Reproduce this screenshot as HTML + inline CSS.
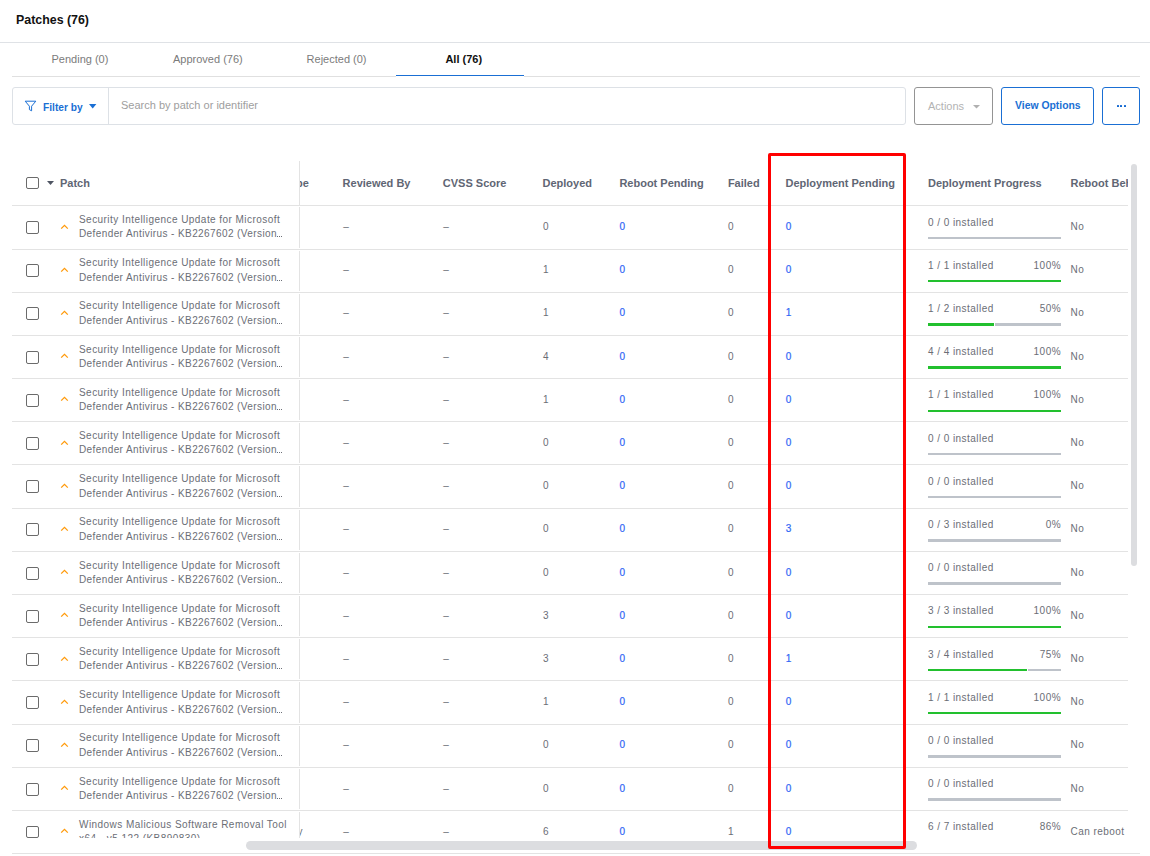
<!DOCTYPE html>
<html><head><meta charset="utf-8"><style>
html,body{margin:0;padding:0;width:1150px;height:856px;overflow:hidden;background:#fff}
body{position:relative;font-family:'Liberation Sans', sans-serif}
.t{position:absolute;white-space:nowrap;line-height:20px;font-family:'Liberation Sans', sans-serif}
.r{position:absolute}
</style></head><body>
<div class="t" style="left:16px;top:10px;font-size:12.4px;font-weight:bold;color:#111;">Patches (76)</div>
<div class="r" style="left:0px;top:42px;width:1150px;height:1px;background:#dfe2e6"></div>
<div class="t" style="left:51.5px;top:49px;font-size:11px;font-weight:normal;color:#7b7b7b;">Pending (0)</div>
<div class="t" style="left:173px;top:49px;font-size:11px;font-weight:normal;color:#7b7b7b;">Approved (76)</div>
<div class="t" style="left:306.6px;top:49px;font-size:11px;font-weight:normal;color:#7b7b7b;">Rejected (0)</div>
<div class="t" style="left:445.4px;top:49px;font-size:11px;font-weight:bold;color:#111;">All (76)</div>
<div class="r" style="left:12px;top:76px;width:384px;height:1px;background:#e0e0e0"></div>
<div class="r" style="left:524px;top:76px;width:616px;height:1px;background:#e0e0e0"></div>
<div class="r" style="left:396px;top:75px;width:128px;height:1px;background:#1a6fd4"></div>
<div class="r" style="left:12px;top:87px;width:894px;height:38px;box-sizing:border-box;border:1px solid #dde1e6;border-radius:3px"></div>
<div class="r" style="left:108px;top:88px;width:1px;height:36px;background:#dde1e6"></div>
<svg class="r" style="left:24px;top:100px" width="13" height="12" viewBox="0 0 13 12"><path d="M1.2 1.2 H11.8 L7.6 6.2 V10.8 L5.4 9.6 V6.2 Z" fill="none" stroke="#1a6fd4" stroke-width="1" stroke-linejoin="round"/></svg>
<div class="t" style="left:43px;top:98px;font-size:10.2px;font-weight:bold;color:#1a6fd4;">Filter by</div>
<svg class="r" style="left:89px;top:104px" width="8" height="5" viewBox="0 0 8 5"><path d="M0 0 H7.4 L3.7 4.4 Z" fill="#1a6fd4"/></svg>
<div class="t" style="left:121px;top:95px;font-size:11px;font-weight:normal;color:#9e9e9e;">Search by patch or identifier</div>
<div class="r" style="left:914px;top:87px;width:79px;height:38px;box-sizing:border-box;border:1px solid #949494;border-radius:3px"></div>
<div class="t" style="left:928px;top:96px;font-size:11px;font-weight:normal;color:#b3b3b3;">Actions</div>
<svg class="r" style="left:973px;top:105px" width="8" height="4" viewBox="0 0 8 4"><path d="M0 0 H7 L3.5 3.5 Z" fill="#b0b0b0"/></svg>
<div class="r" style="left:1001px;top:87px;width:93px;height:38px;box-sizing:border-box;border:1px solid #1a6fd4;border-radius:3px"></div>
<div class="t" style="left:1015px;top:96px;font-size:10.4px;font-weight:bold;color:#1a6fd4;">View Options</div>
<div class="r" style="left:1102px;top:87px;width:38px;height:38px;box-sizing:border-box;border:1px solid #1a6fd4;border-radius:3px"></div>
<div class="r" style="left:1117px;top:105px;width:2px;height:2px;background:#0f66d0;border-radius:0.5px"></div>
<div class="r" style="left:1120px;top:105px;width:2px;height:2px;background:#0f66d0;border-radius:0.5px"></div>
<div class="r" style="left:1124px;top:105px;width:2px;height:2px;background:#0f66d0;border-radius:0.5px"></div>
<div class="r" style="left:26px;top:177px;width:13px;height:12px;box-sizing:border-box;border:1.5px solid #6b6b6b;border-radius:2px"></div>
<svg class="r" style="left:47px;top:181px" width="8" height="5" viewBox="0 0 8 5"><path d="M0 0 H7 L3.5 4 Z" fill="#4f5563"/></svg>
<div class="t" style="left:60px;top:173px;font-size:11px;font-weight:bold;color:#5f6674;">Patch</div>
<div class="r" style="left:300px;top:160px;width:40px;height:40px;overflow:hidden"><div class="t" style="left:-16px;top:13px;font-size:11px;font-weight:bold;color:#5f6674">Type</div></div>
<div class="t" style="left:342.6px;top:173px;font-size:11px;font-weight:bold;color:#5f6674;">Reviewed By</div>
<div class="t" style="left:442.8px;top:173px;font-size:11px;font-weight:bold;color:#5f6674;">CVSS Score</div>
<div class="t" style="left:542.5px;top:173px;font-size:11px;font-weight:bold;color:#5f6674;">Deployed</div>
<div class="t" style="left:619.4px;top:173px;font-size:11px;font-weight:bold;color:#5f6674;">Reboot Pending</div>
<div class="t" style="left:727.9px;top:173px;font-size:11px;font-weight:bold;color:#5f6674;">Failed</div>
<div class="t" style="left:785.5px;top:173px;font-size:11px;font-weight:bold;color:#5f6674;">Deployment Pending</div>
<div class="t" style="left:928px;top:173px;font-size:11px;font-weight:bold;color:#5f6674;">Deployment Progress</div>
<div class="r" style="left:1070px;top:160px;width:58px;height:40px;overflow:hidden"><div class="t" style="left:0.5px;top:13px;font-size:11px;font-weight:bold;color:#5f6674">Reboot Behavior</div></div>
<div class="r" style="left:12px;top:205px;width:1116px;height:1px;background:#e3e3e3"></div>
<div class="r" style="left:299px;top:161px;width:1px;height:44px;background:#e3e3e3"></div>
<div class="r" style="left:0;top:206px;width:1150px;height:632px;overflow:hidden">
<div class="r" style="left:0;top:-206px;width:1150px;height:856px">
<div class="r" style="left:12px;top:249px;width:1116px;height:1px;background:#e3e3e3"></div>
<div class="r" style="left:299px;top:207px;width:1px;height:41px;background:#e3e3e3"></div>
<div class="r" style="left:26px;top:221px;width:13px;height:13px;box-sizing:border-box;border:1.5px solid #6b6b6b;border-radius:2px"></div>
<svg class="r" style="left:60px;top:222.60px" width="9" height="7" viewBox="0 0 9 7"><path d="M1.2 5.6 L4.5 2.3 L7.8 5.6" fill="none" stroke="#ff9a0a" stroke-width="1.3"/></svg>
<div class="t" style="left:79px;top:210px;font-size:10px;font-weight:normal;color:#6b6e76;letter-spacing:0.45px;">Security Intelligence Update for Microsoft</div>
<div class="t" style="left:79px;top:224px;font-size:10px;font-weight:normal;color:#6b6e76;letter-spacing:0.4px;">Defender Antivirus - KB2267602 (Version</div>
<div class="r" style="left:277px;top:236px;width:6px;height:1px;background:repeating-linear-gradient(90deg,#6b6e76 0 1.2px,transparent 1.2px 2.1px)"></div>
<div class="t" style="left:343.2px;top:217px;font-size:10px;font-weight:normal;color:#6b6e76;">–</div>
<div class="t" style="left:443.2px;top:217px;font-size:10px;font-weight:normal;color:#6b6e76;">–</div>
<div class="t" style="left:543px;top:217px;font-size:10px;font-weight:normal;color:#6b6e76;">0</div>
<div class="t" style="left:619.4px;top:217px;font-size:10px;font-weight:normal;color:#2f66f5;-webkit-text-stroke:0.2px #2f66f5">0</div>
<div class="t" style="left:728px;top:217px;font-size:10px;font-weight:normal;color:#6b6e76;">0</div>
<div class="t" style="left:785.8px;top:217px;font-size:10px;font-weight:normal;color:#2f66f5;-webkit-text-stroke:0.2px #2f66f5">0</div>
<div class="t" style="left:928px;top:213px;font-size:10px;font-weight:normal;color:#6b6e76;letter-spacing:0.45px;">0 / 0 installed</div>
<div class="r" style="left:928px;top:237px;width:133px;height:2px;background:#bec3ca"></div>
<div class="t" style="left:1070.5px;top:217px;font-size:10px;font-weight:normal;color:#6b6e76;letter-spacing:0.45px;">No</div>
<div class="r" style="left:12px;top:292px;width:1116px;height:1px;background:#e3e3e3"></div>
<div class="r" style="left:299px;top:251px;width:1px;height:40px;background:#e3e3e3"></div>
<div class="r" style="left:26px;top:264px;width:13px;height:13px;box-sizing:border-box;border:1.5px solid #6b6b6b;border-radius:2px"></div>
<svg class="r" style="left:60px;top:265.80px" width="9" height="7" viewBox="0 0 9 7"><path d="M1.2 5.6 L4.5 2.3 L7.8 5.6" fill="none" stroke="#ff9a0a" stroke-width="1.3"/></svg>
<div class="t" style="left:79px;top:253px;font-size:10px;font-weight:normal;color:#6b6e76;letter-spacing:0.45px;">Security Intelligence Update for Microsoft</div>
<div class="t" style="left:79px;top:268px;font-size:10px;font-weight:normal;color:#6b6e76;letter-spacing:0.4px;">Defender Antivirus - KB2267602 (Version</div>
<div class="r" style="left:277px;top:280px;width:6px;height:1px;background:repeating-linear-gradient(90deg,#6b6e76 0 1.2px,transparent 1.2px 2.1px)"></div>
<div class="t" style="left:343.2px;top:260px;font-size:10px;font-weight:normal;color:#6b6e76;">–</div>
<div class="t" style="left:443.2px;top:260px;font-size:10px;font-weight:normal;color:#6b6e76;">–</div>
<div class="t" style="left:543px;top:260px;font-size:10px;font-weight:normal;color:#6b6e76;">1</div>
<div class="t" style="left:619.4px;top:260px;font-size:10px;font-weight:normal;color:#2f66f5;-webkit-text-stroke:0.2px #2f66f5">0</div>
<div class="t" style="left:728px;top:260px;font-size:10px;font-weight:normal;color:#6b6e76;">0</div>
<div class="t" style="left:785.8px;top:260px;font-size:10px;font-weight:normal;color:#2f66f5;-webkit-text-stroke:0.2px #2f66f5">0</div>
<div class="t" style="left:928px;top:256px;font-size:10px;font-weight:normal;color:#6b6e76;letter-spacing:0.45px;">1 / 1 installed</div>
<div class="t" style="left:1020px;top:256px;font-size:10px;font-weight:normal;color:#6b6e76;letter-spacing:0.45px;width:41px;text-align:right">100%</div>
<div class="r" style="left:928px;top:280px;width:133px;height:2px;background:#22c02e"></div>
<div class="t" style="left:1070.5px;top:260px;font-size:10px;font-weight:normal;color:#6b6e76;letter-spacing:0.45px;">No</div>
<div class="r" style="left:12px;top:335px;width:1116px;height:1px;background:#e3e3e3"></div>
<div class="r" style="left:299px;top:294px;width:1px;height:40px;background:#e3e3e3"></div>
<div class="r" style="left:26px;top:307px;width:13px;height:13px;box-sizing:border-box;border:1.5px solid #6b6b6b;border-radius:2px"></div>
<svg class="r" style="left:60px;top:309.00px" width="9" height="7" viewBox="0 0 9 7"><path d="M1.2 5.6 L4.5 2.3 L7.8 5.6" fill="none" stroke="#ff9a0a" stroke-width="1.3"/></svg>
<div class="t" style="left:79px;top:296px;font-size:10px;font-weight:normal;color:#6b6e76;letter-spacing:0.45px;">Security Intelligence Update for Microsoft</div>
<div class="t" style="left:79px;top:311px;font-size:10px;font-weight:normal;color:#6b6e76;letter-spacing:0.4px;">Defender Antivirus - KB2267602 (Version</div>
<div class="r" style="left:277px;top:323px;width:6px;height:1px;background:repeating-linear-gradient(90deg,#6b6e76 0 1.2px,transparent 1.2px 2.1px)"></div>
<div class="t" style="left:343.2px;top:303px;font-size:10px;font-weight:normal;color:#6b6e76;">–</div>
<div class="t" style="left:443.2px;top:303px;font-size:10px;font-weight:normal;color:#6b6e76;">–</div>
<div class="t" style="left:543px;top:303px;font-size:10px;font-weight:normal;color:#6b6e76;">1</div>
<div class="t" style="left:619.4px;top:303px;font-size:10px;font-weight:normal;color:#2f66f5;-webkit-text-stroke:0.2px #2f66f5">0</div>
<div class="t" style="left:728px;top:303px;font-size:10px;font-weight:normal;color:#6b6e76;">0</div>
<div class="t" style="left:785.8px;top:303px;font-size:10px;font-weight:normal;color:#2f66f5;-webkit-text-stroke:0.2px #2f66f5">1</div>
<div class="t" style="left:928px;top:299px;font-size:10px;font-weight:normal;color:#6b6e76;letter-spacing:0.45px;">1 / 2 installed</div>
<div class="t" style="left:1020px;top:299px;font-size:10px;font-weight:normal;color:#6b6e76;letter-spacing:0.45px;width:41px;text-align:right">50%</div>
<div class="r" style="left:928px;top:323px;width:66px;height:3px;background:#22c02e"></div>
<div class="r" style="left:995px;top:323px;width:66px;height:3px;background:#bec3ca"></div>
<div class="t" style="left:1070.5px;top:303px;font-size:10px;font-weight:normal;color:#6b6e76;letter-spacing:0.45px;">No</div>
<div class="r" style="left:12px;top:378px;width:1116px;height:1px;background:#e3e3e3"></div>
<div class="r" style="left:299px;top:337px;width:1px;height:40px;background:#e3e3e3"></div>
<div class="r" style="left:26px;top:351px;width:13px;height:13px;box-sizing:border-box;border:1.5px solid #6b6b6b;border-radius:2px"></div>
<svg class="r" style="left:60px;top:352.20px" width="9" height="7" viewBox="0 0 9 7"><path d="M1.2 5.6 L4.5 2.3 L7.8 5.6" fill="none" stroke="#ff9a0a" stroke-width="1.3"/></svg>
<div class="t" style="left:79px;top:340px;font-size:10px;font-weight:normal;color:#6b6e76;letter-spacing:0.45px;">Security Intelligence Update for Microsoft</div>
<div class="t" style="left:79px;top:354px;font-size:10px;font-weight:normal;color:#6b6e76;letter-spacing:0.4px;">Defender Antivirus - KB2267602 (Version</div>
<div class="r" style="left:277px;top:366px;width:6px;height:1px;background:repeating-linear-gradient(90deg,#6b6e76 0 1.2px,transparent 1.2px 2.1px)"></div>
<div class="t" style="left:343.2px;top:347px;font-size:10px;font-weight:normal;color:#6b6e76;">–</div>
<div class="t" style="left:443.2px;top:347px;font-size:10px;font-weight:normal;color:#6b6e76;">–</div>
<div class="t" style="left:543px;top:347px;font-size:10px;font-weight:normal;color:#6b6e76;">4</div>
<div class="t" style="left:619.4px;top:347px;font-size:10px;font-weight:normal;color:#2f66f5;-webkit-text-stroke:0.2px #2f66f5">0</div>
<div class="t" style="left:728px;top:347px;font-size:10px;font-weight:normal;color:#6b6e76;">0</div>
<div class="t" style="left:785.8px;top:347px;font-size:10px;font-weight:normal;color:#2f66f5;-webkit-text-stroke:0.2px #2f66f5">0</div>
<div class="t" style="left:928px;top:342px;font-size:10px;font-weight:normal;color:#6b6e76;letter-spacing:0.45px;">4 / 4 installed</div>
<div class="t" style="left:1020px;top:342px;font-size:10px;font-weight:normal;color:#6b6e76;letter-spacing:0.45px;width:41px;text-align:right">100%</div>
<div class="r" style="left:928px;top:366px;width:133px;height:3px;background:#22c02e"></div>
<div class="t" style="left:1070.5px;top:347px;font-size:10px;font-weight:normal;color:#6b6e76;letter-spacing:0.45px;">No</div>
<div class="r" style="left:12px;top:421px;width:1116px;height:1px;background:#e3e3e3"></div>
<div class="r" style="left:299px;top:380px;width:1px;height:40px;background:#e3e3e3"></div>
<div class="r" style="left:26px;top:394px;width:13px;height:13px;box-sizing:border-box;border:1.5px solid #6b6b6b;border-radius:2px"></div>
<svg class="r" style="left:60px;top:395.40px" width="9" height="7" viewBox="0 0 9 7"><path d="M1.2 5.6 L4.5 2.3 L7.8 5.6" fill="none" stroke="#ff9a0a" stroke-width="1.3"/></svg>
<div class="t" style="left:79px;top:383px;font-size:10px;font-weight:normal;color:#6b6e76;letter-spacing:0.45px;">Security Intelligence Update for Microsoft</div>
<div class="t" style="left:79px;top:397px;font-size:10px;font-weight:normal;color:#6b6e76;letter-spacing:0.4px;">Defender Antivirus - KB2267602 (Version</div>
<div class="r" style="left:277px;top:409px;width:6px;height:1px;background:repeating-linear-gradient(90deg,#6b6e76 0 1.2px,transparent 1.2px 2.1px)"></div>
<div class="t" style="left:343.2px;top:390px;font-size:10px;font-weight:normal;color:#6b6e76;">–</div>
<div class="t" style="left:443.2px;top:390px;font-size:10px;font-weight:normal;color:#6b6e76;">–</div>
<div class="t" style="left:543px;top:390px;font-size:10px;font-weight:normal;color:#6b6e76;">1</div>
<div class="t" style="left:619.4px;top:390px;font-size:10px;font-weight:normal;color:#2f66f5;-webkit-text-stroke:0.2px #2f66f5">0</div>
<div class="t" style="left:728px;top:390px;font-size:10px;font-weight:normal;color:#6b6e76;">0</div>
<div class="t" style="left:785.8px;top:390px;font-size:10px;font-weight:normal;color:#2f66f5;-webkit-text-stroke:0.2px #2f66f5">0</div>
<div class="t" style="left:928px;top:385px;font-size:10px;font-weight:normal;color:#6b6e76;letter-spacing:0.45px;">1 / 1 installed</div>
<div class="t" style="left:1020px;top:385px;font-size:10px;font-weight:normal;color:#6b6e76;letter-spacing:0.45px;width:41px;text-align:right">100%</div>
<div class="r" style="left:928px;top:410px;width:133px;height:2px;background:#22c02e"></div>
<div class="t" style="left:1070.5px;top:390px;font-size:10px;font-weight:normal;color:#6b6e76;letter-spacing:0.45px;">No</div>
<div class="r" style="left:12px;top:464px;width:1116px;height:1px;background:#e3e3e3"></div>
<div class="r" style="left:299px;top:423px;width:1px;height:40px;background:#e3e3e3"></div>
<div class="r" style="left:26px;top:437px;width:13px;height:13px;box-sizing:border-box;border:1.5px solid #6b6b6b;border-radius:2px"></div>
<svg class="r" style="left:60px;top:438.60px" width="9" height="7" viewBox="0 0 9 7"><path d="M1.2 5.6 L4.5 2.3 L7.8 5.6" fill="none" stroke="#ff9a0a" stroke-width="1.3"/></svg>
<div class="t" style="left:79px;top:426px;font-size:10px;font-weight:normal;color:#6b6e76;letter-spacing:0.45px;">Security Intelligence Update for Microsoft</div>
<div class="t" style="left:79px;top:440px;font-size:10px;font-weight:normal;color:#6b6e76;letter-spacing:0.4px;">Defender Antivirus - KB2267602 (Version</div>
<div class="r" style="left:277px;top:452px;width:6px;height:1px;background:repeating-linear-gradient(90deg,#6b6e76 0 1.2px,transparent 1.2px 2.1px)"></div>
<div class="t" style="left:343.2px;top:433px;font-size:10px;font-weight:normal;color:#6b6e76;">–</div>
<div class="t" style="left:443.2px;top:433px;font-size:10px;font-weight:normal;color:#6b6e76;">–</div>
<div class="t" style="left:543px;top:433px;font-size:10px;font-weight:normal;color:#6b6e76;">0</div>
<div class="t" style="left:619.4px;top:433px;font-size:10px;font-weight:normal;color:#2f66f5;-webkit-text-stroke:0.2px #2f66f5">0</div>
<div class="t" style="left:728px;top:433px;font-size:10px;font-weight:normal;color:#6b6e76;">0</div>
<div class="t" style="left:785.8px;top:433px;font-size:10px;font-weight:normal;color:#2f66f5;-webkit-text-stroke:0.2px #2f66f5">0</div>
<div class="t" style="left:928px;top:429px;font-size:10px;font-weight:normal;color:#6b6e76;letter-spacing:0.45px;">0 / 0 installed</div>
<div class="r" style="left:928px;top:453px;width:133px;height:2px;background:#bec3ca"></div>
<div class="t" style="left:1070.5px;top:433px;font-size:10px;font-weight:normal;color:#6b6e76;letter-spacing:0.45px;">No</div>
<div class="r" style="left:12px;top:508px;width:1116px;height:1px;background:#e3e3e3"></div>
<div class="r" style="left:299px;top:466px;width:1px;height:41px;background:#e3e3e3"></div>
<div class="r" style="left:26px;top:480px;width:13px;height:13px;box-sizing:border-box;border:1.5px solid #6b6b6b;border-radius:2px"></div>
<svg class="r" style="left:60px;top:481.80px" width="9" height="7" viewBox="0 0 9 7"><path d="M1.2 5.6 L4.5 2.3 L7.8 5.6" fill="none" stroke="#ff9a0a" stroke-width="1.3"/></svg>
<div class="t" style="left:79px;top:469px;font-size:10px;font-weight:normal;color:#6b6e76;letter-spacing:0.45px;">Security Intelligence Update for Microsoft</div>
<div class="t" style="left:79px;top:484px;font-size:10px;font-weight:normal;color:#6b6e76;letter-spacing:0.4px;">Defender Antivirus - KB2267602 (Version</div>
<div class="r" style="left:277px;top:496px;width:6px;height:1px;background:repeating-linear-gradient(90deg,#6b6e76 0 1.2px,transparent 1.2px 2.1px)"></div>
<div class="t" style="left:343.2px;top:476px;font-size:10px;font-weight:normal;color:#6b6e76;">–</div>
<div class="t" style="left:443.2px;top:476px;font-size:10px;font-weight:normal;color:#6b6e76;">–</div>
<div class="t" style="left:543px;top:476px;font-size:10px;font-weight:normal;color:#6b6e76;">0</div>
<div class="t" style="left:619.4px;top:476px;font-size:10px;font-weight:normal;color:#2f66f5;-webkit-text-stroke:0.2px #2f66f5">0</div>
<div class="t" style="left:728px;top:476px;font-size:10px;font-weight:normal;color:#6b6e76;">0</div>
<div class="t" style="left:785.8px;top:476px;font-size:10px;font-weight:normal;color:#2f66f5;-webkit-text-stroke:0.2px #2f66f5">0</div>
<div class="t" style="left:928px;top:472px;font-size:10px;font-weight:normal;color:#6b6e76;letter-spacing:0.45px;">0 / 0 installed</div>
<div class="r" style="left:928px;top:496px;width:133px;height:2px;background:#bec3ca"></div>
<div class="t" style="left:1070.5px;top:476px;font-size:10px;font-weight:normal;color:#6b6e76;letter-spacing:0.45px;">No</div>
<div class="r" style="left:12px;top:551px;width:1116px;height:1px;background:#e3e3e3"></div>
<div class="r" style="left:299px;top:510px;width:1px;height:40px;background:#e3e3e3"></div>
<div class="r" style="left:26px;top:523px;width:13px;height:13px;box-sizing:border-box;border:1.5px solid #6b6b6b;border-radius:2px"></div>
<svg class="r" style="left:60px;top:525.00px" width="9" height="7" viewBox="0 0 9 7"><path d="M1.2 5.6 L4.5 2.3 L7.8 5.6" fill="none" stroke="#ff9a0a" stroke-width="1.3"/></svg>
<div class="t" style="left:79px;top:512px;font-size:10px;font-weight:normal;color:#6b6e76;letter-spacing:0.45px;">Security Intelligence Update for Microsoft</div>
<div class="t" style="left:79px;top:527px;font-size:10px;font-weight:normal;color:#6b6e76;letter-spacing:0.4px;">Defender Antivirus - KB2267602 (Version</div>
<div class="r" style="left:277px;top:539px;width:6px;height:1px;background:repeating-linear-gradient(90deg,#6b6e76 0 1.2px,transparent 1.2px 2.1px)"></div>
<div class="t" style="left:343.2px;top:519px;font-size:10px;font-weight:normal;color:#6b6e76;">–</div>
<div class="t" style="left:443.2px;top:519px;font-size:10px;font-weight:normal;color:#6b6e76;">–</div>
<div class="t" style="left:543px;top:519px;font-size:10px;font-weight:normal;color:#6b6e76;">0</div>
<div class="t" style="left:619.4px;top:519px;font-size:10px;font-weight:normal;color:#2f66f5;-webkit-text-stroke:0.2px #2f66f5">0</div>
<div class="t" style="left:728px;top:519px;font-size:10px;font-weight:normal;color:#6b6e76;">0</div>
<div class="t" style="left:785.8px;top:519px;font-size:10px;font-weight:normal;color:#2f66f5;-webkit-text-stroke:0.2px #2f66f5">3</div>
<div class="t" style="left:928px;top:515px;font-size:10px;font-weight:normal;color:#6b6e76;letter-spacing:0.45px;">0 / 3 installed</div>
<div class="t" style="left:1020px;top:515px;font-size:10px;font-weight:normal;color:#6b6e76;letter-spacing:0.45px;width:41px;text-align:right">0%</div>
<div class="r" style="left:928px;top:539px;width:133px;height:3px;background:#bec3ca"></div>
<div class="t" style="left:1070.5px;top:519px;font-size:10px;font-weight:normal;color:#6b6e76;letter-spacing:0.45px;">No</div>
<div class="r" style="left:12px;top:594px;width:1116px;height:1px;background:#e3e3e3"></div>
<div class="r" style="left:299px;top:553px;width:1px;height:40px;background:#e3e3e3"></div>
<div class="r" style="left:26px;top:567px;width:13px;height:13px;box-sizing:border-box;border:1.5px solid #6b6b6b;border-radius:2px"></div>
<svg class="r" style="left:60px;top:568.20px" width="9" height="7" viewBox="0 0 9 7"><path d="M1.2 5.6 L4.5 2.3 L7.8 5.6" fill="none" stroke="#ff9a0a" stroke-width="1.3"/></svg>
<div class="t" style="left:79px;top:556px;font-size:10px;font-weight:normal;color:#6b6e76;letter-spacing:0.45px;">Security Intelligence Update for Microsoft</div>
<div class="t" style="left:79px;top:570px;font-size:10px;font-weight:normal;color:#6b6e76;letter-spacing:0.4px;">Defender Antivirus - KB2267602 (Version</div>
<div class="r" style="left:277px;top:582px;width:6px;height:1px;background:repeating-linear-gradient(90deg,#6b6e76 0 1.2px,transparent 1.2px 2.1px)"></div>
<div class="t" style="left:343.2px;top:563px;font-size:10px;font-weight:normal;color:#6b6e76;">–</div>
<div class="t" style="left:443.2px;top:563px;font-size:10px;font-weight:normal;color:#6b6e76;">–</div>
<div class="t" style="left:543px;top:563px;font-size:10px;font-weight:normal;color:#6b6e76;">0</div>
<div class="t" style="left:619.4px;top:563px;font-size:10px;font-weight:normal;color:#2f66f5;-webkit-text-stroke:0.2px #2f66f5">0</div>
<div class="t" style="left:728px;top:563px;font-size:10px;font-weight:normal;color:#6b6e76;">0</div>
<div class="t" style="left:785.8px;top:563px;font-size:10px;font-weight:normal;color:#2f66f5;-webkit-text-stroke:0.2px #2f66f5">0</div>
<div class="t" style="left:928px;top:558px;font-size:10px;font-weight:normal;color:#6b6e76;letter-spacing:0.45px;">0 / 0 installed</div>
<div class="r" style="left:928px;top:582px;width:133px;height:3px;background:#bec3ca"></div>
<div class="t" style="left:1070.5px;top:563px;font-size:10px;font-weight:normal;color:#6b6e76;letter-spacing:0.45px;">No</div>
<div class="r" style="left:12px;top:637px;width:1116px;height:1px;background:#e3e3e3"></div>
<div class="r" style="left:299px;top:596px;width:1px;height:40px;background:#e3e3e3"></div>
<div class="r" style="left:26px;top:610px;width:13px;height:13px;box-sizing:border-box;border:1.5px solid #6b6b6b;border-radius:2px"></div>
<svg class="r" style="left:60px;top:611.40px" width="9" height="7" viewBox="0 0 9 7"><path d="M1.2 5.6 L4.5 2.3 L7.8 5.6" fill="none" stroke="#ff9a0a" stroke-width="1.3"/></svg>
<div class="t" style="left:79px;top:599px;font-size:10px;font-weight:normal;color:#6b6e76;letter-spacing:0.45px;">Security Intelligence Update for Microsoft</div>
<div class="t" style="left:79px;top:613px;font-size:10px;font-weight:normal;color:#6b6e76;letter-spacing:0.4px;">Defender Antivirus - KB2267602 (Version</div>
<div class="r" style="left:277px;top:625px;width:6px;height:1px;background:repeating-linear-gradient(90deg,#6b6e76 0 1.2px,transparent 1.2px 2.1px)"></div>
<div class="t" style="left:343.2px;top:606px;font-size:10px;font-weight:normal;color:#6b6e76;">–</div>
<div class="t" style="left:443.2px;top:606px;font-size:10px;font-weight:normal;color:#6b6e76;">–</div>
<div class="t" style="left:543px;top:606px;font-size:10px;font-weight:normal;color:#6b6e76;">3</div>
<div class="t" style="left:619.4px;top:606px;font-size:10px;font-weight:normal;color:#2f66f5;-webkit-text-stroke:0.2px #2f66f5">0</div>
<div class="t" style="left:728px;top:606px;font-size:10px;font-weight:normal;color:#6b6e76;">0</div>
<div class="t" style="left:785.8px;top:606px;font-size:10px;font-weight:normal;color:#2f66f5;-webkit-text-stroke:0.2px #2f66f5">0</div>
<div class="t" style="left:928px;top:601px;font-size:10px;font-weight:normal;color:#6b6e76;letter-spacing:0.45px;">3 / 3 installed</div>
<div class="t" style="left:1020px;top:601px;font-size:10px;font-weight:normal;color:#6b6e76;letter-spacing:0.45px;width:41px;text-align:right">100%</div>
<div class="r" style="left:928px;top:626px;width:133px;height:2px;background:#22c02e"></div>
<div class="t" style="left:1070.5px;top:606px;font-size:10px;font-weight:normal;color:#6b6e76;letter-spacing:0.45px;">No</div>
<div class="r" style="left:12px;top:680px;width:1116px;height:1px;background:#e3e3e3"></div>
<div class="r" style="left:299px;top:639px;width:1px;height:40px;background:#e3e3e3"></div>
<div class="r" style="left:26px;top:653px;width:13px;height:13px;box-sizing:border-box;border:1.5px solid #6b6b6b;border-radius:2px"></div>
<svg class="r" style="left:60px;top:654.60px" width="9" height="7" viewBox="0 0 9 7"><path d="M1.2 5.6 L4.5 2.3 L7.8 5.6" fill="none" stroke="#ff9a0a" stroke-width="1.3"/></svg>
<div class="t" style="left:79px;top:642px;font-size:10px;font-weight:normal;color:#6b6e76;letter-spacing:0.45px;">Security Intelligence Update for Microsoft</div>
<div class="t" style="left:79px;top:656px;font-size:10px;font-weight:normal;color:#6b6e76;letter-spacing:0.4px;">Defender Antivirus - KB2267602 (Version</div>
<div class="r" style="left:277px;top:668px;width:6px;height:1px;background:repeating-linear-gradient(90deg,#6b6e76 0 1.2px,transparent 1.2px 2.1px)"></div>
<div class="t" style="left:343.2px;top:649px;font-size:10px;font-weight:normal;color:#6b6e76;">–</div>
<div class="t" style="left:443.2px;top:649px;font-size:10px;font-weight:normal;color:#6b6e76;">–</div>
<div class="t" style="left:543px;top:649px;font-size:10px;font-weight:normal;color:#6b6e76;">3</div>
<div class="t" style="left:619.4px;top:649px;font-size:10px;font-weight:normal;color:#2f66f5;-webkit-text-stroke:0.2px #2f66f5">0</div>
<div class="t" style="left:728px;top:649px;font-size:10px;font-weight:normal;color:#6b6e76;">0</div>
<div class="t" style="left:785.8px;top:649px;font-size:10px;font-weight:normal;color:#2f66f5;-webkit-text-stroke:0.2px #2f66f5">1</div>
<div class="t" style="left:928px;top:645px;font-size:10px;font-weight:normal;color:#6b6e76;letter-spacing:0.45px;">3 / 4 installed</div>
<div class="t" style="left:1020px;top:645px;font-size:10px;font-weight:normal;color:#6b6e76;letter-spacing:0.45px;width:41px;text-align:right">75%</div>
<div class="r" style="left:928px;top:669px;width:99px;height:2px;background:#22c02e"></div>
<div class="r" style="left:1028px;top:669px;width:33px;height:2px;background:#bec3ca"></div>
<div class="t" style="left:1070.5px;top:649px;font-size:10px;font-weight:normal;color:#6b6e76;letter-spacing:0.45px;">No</div>
<div class="r" style="left:12px;top:724px;width:1116px;height:1px;background:#e3e3e3"></div>
<div class="r" style="left:299px;top:682px;width:1px;height:41px;background:#e3e3e3"></div>
<div class="r" style="left:26px;top:696px;width:13px;height:13px;box-sizing:border-box;border:1.5px solid #6b6b6b;border-radius:2px"></div>
<svg class="r" style="left:60px;top:697.80px" width="9" height="7" viewBox="0 0 9 7"><path d="M1.2 5.6 L4.5 2.3 L7.8 5.6" fill="none" stroke="#ff9a0a" stroke-width="1.3"/></svg>
<div class="t" style="left:79px;top:685px;font-size:10px;font-weight:normal;color:#6b6e76;letter-spacing:0.45px;">Security Intelligence Update for Microsoft</div>
<div class="t" style="left:79px;top:700px;font-size:10px;font-weight:normal;color:#6b6e76;letter-spacing:0.4px;">Defender Antivirus - KB2267602 (Version</div>
<div class="r" style="left:277px;top:712px;width:6px;height:1px;background:repeating-linear-gradient(90deg,#6b6e76 0 1.2px,transparent 1.2px 2.1px)"></div>
<div class="t" style="left:343.2px;top:692px;font-size:10px;font-weight:normal;color:#6b6e76;">–</div>
<div class="t" style="left:443.2px;top:692px;font-size:10px;font-weight:normal;color:#6b6e76;">–</div>
<div class="t" style="left:543px;top:692px;font-size:10px;font-weight:normal;color:#6b6e76;">1</div>
<div class="t" style="left:619.4px;top:692px;font-size:10px;font-weight:normal;color:#2f66f5;-webkit-text-stroke:0.2px #2f66f5">0</div>
<div class="t" style="left:728px;top:692px;font-size:10px;font-weight:normal;color:#6b6e76;">0</div>
<div class="t" style="left:785.8px;top:692px;font-size:10px;font-weight:normal;color:#2f66f5;-webkit-text-stroke:0.2px #2f66f5">0</div>
<div class="t" style="left:928px;top:688px;font-size:10px;font-weight:normal;color:#6b6e76;letter-spacing:0.45px;">1 / 1 installed</div>
<div class="t" style="left:1020px;top:688px;font-size:10px;font-weight:normal;color:#6b6e76;letter-spacing:0.45px;width:41px;text-align:right">100%</div>
<div class="r" style="left:928px;top:712px;width:133px;height:2px;background:#22c02e"></div>
<div class="t" style="left:1070.5px;top:692px;font-size:10px;font-weight:normal;color:#6b6e76;letter-spacing:0.45px;">No</div>
<div class="r" style="left:12px;top:767px;width:1116px;height:1px;background:#e3e3e3"></div>
<div class="r" style="left:299px;top:726px;width:1px;height:40px;background:#e3e3e3"></div>
<div class="r" style="left:26px;top:739px;width:13px;height:13px;box-sizing:border-box;border:1.5px solid #6b6b6b;border-radius:2px"></div>
<svg class="r" style="left:60px;top:741.00px" width="9" height="7" viewBox="0 0 9 7"><path d="M1.2 5.6 L4.5 2.3 L7.8 5.6" fill="none" stroke="#ff9a0a" stroke-width="1.3"/></svg>
<div class="t" style="left:79px;top:728px;font-size:10px;font-weight:normal;color:#6b6e76;letter-spacing:0.45px;">Security Intelligence Update for Microsoft</div>
<div class="t" style="left:79px;top:743px;font-size:10px;font-weight:normal;color:#6b6e76;letter-spacing:0.4px;">Defender Antivirus - KB2267602 (Version</div>
<div class="r" style="left:277px;top:755px;width:6px;height:1px;background:repeating-linear-gradient(90deg,#6b6e76 0 1.2px,transparent 1.2px 2.1px)"></div>
<div class="t" style="left:343.2px;top:735px;font-size:10px;font-weight:normal;color:#6b6e76;">–</div>
<div class="t" style="left:443.2px;top:735px;font-size:10px;font-weight:normal;color:#6b6e76;">–</div>
<div class="t" style="left:543px;top:735px;font-size:10px;font-weight:normal;color:#6b6e76;">0</div>
<div class="t" style="left:619.4px;top:735px;font-size:10px;font-weight:normal;color:#2f66f5;-webkit-text-stroke:0.2px #2f66f5">0</div>
<div class="t" style="left:728px;top:735px;font-size:10px;font-weight:normal;color:#6b6e76;">0</div>
<div class="t" style="left:785.8px;top:735px;font-size:10px;font-weight:normal;color:#2f66f5;-webkit-text-stroke:0.2px #2f66f5">0</div>
<div class="t" style="left:928px;top:731px;font-size:10px;font-weight:normal;color:#6b6e76;letter-spacing:0.45px;">0 / 0 installed</div>
<div class="r" style="left:928px;top:755px;width:133px;height:3px;background:#bec3ca"></div>
<div class="t" style="left:1070.5px;top:735px;font-size:10px;font-weight:normal;color:#6b6e76;letter-spacing:0.45px;">No</div>
<div class="r" style="left:12px;top:810px;width:1116px;height:1px;background:#e3e3e3"></div>
<div class="r" style="left:299px;top:769px;width:1px;height:40px;background:#e3e3e3"></div>
<div class="r" style="left:26px;top:783px;width:13px;height:13px;box-sizing:border-box;border:1.5px solid #6b6b6b;border-radius:2px"></div>
<svg class="r" style="left:60px;top:784.20px" width="9" height="7" viewBox="0 0 9 7"><path d="M1.2 5.6 L4.5 2.3 L7.8 5.6" fill="none" stroke="#ff9a0a" stroke-width="1.3"/></svg>
<div class="t" style="left:79px;top:772px;font-size:10px;font-weight:normal;color:#6b6e76;letter-spacing:0.45px;">Security Intelligence Update for Microsoft</div>
<div class="t" style="left:79px;top:786px;font-size:10px;font-weight:normal;color:#6b6e76;letter-spacing:0.4px;">Defender Antivirus - KB2267602 (Version</div>
<div class="r" style="left:277px;top:798px;width:6px;height:1px;background:repeating-linear-gradient(90deg,#6b6e76 0 1.2px,transparent 1.2px 2.1px)"></div>
<div class="t" style="left:343.2px;top:779px;font-size:10px;font-weight:normal;color:#6b6e76;">–</div>
<div class="t" style="left:443.2px;top:779px;font-size:10px;font-weight:normal;color:#6b6e76;">–</div>
<div class="t" style="left:543px;top:779px;font-size:10px;font-weight:normal;color:#6b6e76;">0</div>
<div class="t" style="left:619.4px;top:779px;font-size:10px;font-weight:normal;color:#2f66f5;-webkit-text-stroke:0.2px #2f66f5">0</div>
<div class="t" style="left:728px;top:779px;font-size:10px;font-weight:normal;color:#6b6e76;">0</div>
<div class="t" style="left:785.8px;top:779px;font-size:10px;font-weight:normal;color:#2f66f5;-webkit-text-stroke:0.2px #2f66f5">0</div>
<div class="t" style="left:928px;top:774px;font-size:10px;font-weight:normal;color:#6b6e76;letter-spacing:0.45px;">0 / 0 installed</div>
<div class="r" style="left:928px;top:798px;width:133px;height:3px;background:#bec3ca"></div>
<div class="t" style="left:1070.5px;top:779px;font-size:10px;font-weight:normal;color:#6b6e76;letter-spacing:0.45px;">No</div>
<div class="r" style="left:299px;top:812px;width:1px;height:40px;background:#e3e3e3"></div>
<div class="r" style="left:26px;top:826px;width:13px;height:12px;box-sizing:border-box;border:1.5px solid #6b6b6b;border-radius:2px"></div>
<svg class="r" style="left:60px;top:827.40px" width="9" height="7" viewBox="0 0 9 7"><path d="M1.2 5.6 L4.5 2.3 L7.8 5.6" fill="none" stroke="#ff9a0a" stroke-width="1.3"/></svg>
<div class="t" style="left:79px;top:815px;font-size:10px;font-weight:normal;color:#6b6e76;letter-spacing:0.45px;">Windows Malicious Software Removal Tool</div>
<div class="t" style="left:79px;top:829px;font-size:10px;font-weight:normal;color:#6b6e76;letter-spacing:0.45px;">x64 - v5.122 (KB890830)</div>
<div class="t" style="left:343.2px;top:822px;font-size:10px;font-weight:normal;color:#6b6e76;">–</div>
<div class="t" style="left:443.2px;top:822px;font-size:10px;font-weight:normal;color:#6b6e76;">–</div>
<div class="t" style="left:543px;top:822px;font-size:10px;font-weight:normal;color:#6b6e76;">6</div>
<div class="t" style="left:619.4px;top:822px;font-size:10px;font-weight:normal;color:#2f66f5;-webkit-text-stroke:0.2px #2f66f5">0</div>
<div class="t" style="left:728px;top:822px;font-size:10px;font-weight:normal;color:#6b6e76;">1</div>
<div class="t" style="left:785.8px;top:822px;font-size:10px;font-weight:normal;color:#2f66f5;-webkit-text-stroke:0.2px #2f66f5">0</div>
<div class="t" style="left:928px;top:817px;font-size:10px;font-weight:normal;color:#6b6e76;letter-spacing:0.45px;">6 / 7 installed</div>
<div class="t" style="left:1020px;top:817px;font-size:10px;font-weight:normal;color:#6b6e76;letter-spacing:0.45px;width:41px;text-align:right">86%</div>
<div class="r" style="left:928px;top:842px;width:114px;height:2px;background:#22c02e"></div>
<div class="r" style="left:1043px;top:842px;width:18px;height:2px;background:#bec3ca"></div>
<div class="t" style="left:1070.5px;top:822px;font-size:10px;font-weight:normal;color:#6b6e76;letter-spacing:0.45px;">Can reboot</div>
<div class="r" style="left:300px;top:811px;width:10px;height:42px;overflow:hidden"><div class="t" style="left:-2.5px;top:11px;font-size:10px;color:#6b6e76">y</div></div>
</div></div>
<div class="r" style="left:246px;top:841px;width:671px;height:9px;background:#dcdde0;border-radius:5px"></div>
<div class="r" style="left:1131px;top:164px;width:6px;height:402px;background:#dcdde0;border-radius:3px"></div>
<div class="r" style="left:12px;top:853px;width:1128px;height:1px;background:#e3e3e3"></div>
<div class="r" style="left:768px;top:153px;width:138px;height:696px;box-sizing:border-box;border:3px solid #ff0000;border-radius:2px"></div>
</body></html>
